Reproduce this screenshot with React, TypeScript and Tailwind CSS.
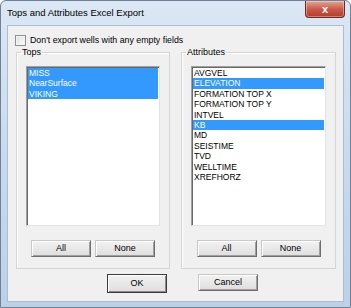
import { useState } from 'react';

const tops = ['MISS', 'NearSurface', 'VIKING'];
const attributes = [
  'AVGVEL',
  'ELEVATION',
  'FORMATION TOP X',
  'FORMATION TOP Y',
  'INTVEL',
  'KB',
  'MD',
  'SEISTIME',
  'TVD',
  'WELLTIME',
  'XREFHORZ',
];

function WinButton({ label, isDefault = false }: { label: string; isDefault?: boolean }) {
  return (
    <button
      className={`w-[60px] flex items-center justify-center text-[9px] text-black bg-gradient-to-b from-[#f2f2f2] to-[#dedede] ${
        isDefault
          ? 'h-[19px] border border-[#3c3c3c] shadow-[inset_1px_1px_0_#ffffff,inset_-1px_-1px_0_#8a8a8a]'
          : 'h-[17px] border border-[#c8c8c8] border-r-[#6e6e6e] border-b-[#6e6e6e] shadow-[inset_1px_1px_0_#ffffff,inset_-1px_-1px_0_#a0a0a0]'
      }`}
    >
      {label}
    </button>
  );
}

function ListBox({ items, selected }: { items: string[]; selected: string[] }) {
  return (
    <div className="h-[160px] bg-white border border-[#a0a0a0] border-r-[#e3e3e3] border-b-[#e3e3e3] shadow-[inset_1px_1px_0_#696969] pt-[1px] pl-[1px] pr-[1px]">
      {items.map((item) => (
        <div
          key={item}
          className={`h-[10.4px] leading-[10.4px] text-[8.5px] pl-[1px] whitespace-nowrap ${
            selected.includes(item) ? 'bg-[#3399ff] text-white' : 'text-black'
          }`}
        >
          {item}
        </div>
      ))}
    </div>
  );
}

function GroupBox({ title, children }: { title: string; children: React.ReactNode }) {
  return (
    <fieldset className="h-[222px] border border-[#d5d5d5] shadow-[inset_1px_1px_0_#ffffff] px-[9px] pt-[8px] flex flex-col">
      <legend className="-ml-[5px] px-[1px] text-[9px] leading-[11px] text-black">{title}</legend>
      {children}
    </fieldset>
  );
}

export default function App() {
  const [skipEmpty, setSkipEmpty] = useState(false);

  return (
    <div className="w-[351px] h-[308px] flex flex-col rounded-t-[6px] border border-[#6f8196] bg-gradient-to-b from-[#dbe7f4] via-[#c9daee] to-[#bcd0e7] font-['Liberation_Sans',Arial,sans-serif]">
      {/* Title bar */}
      <div className="h-[24px] flex items-start pl-[6px] pr-[5px]">
        <span className="mt-[6px] text-[9.5px] leading-[12px] text-black">Tops and Attributes Excel Export</span>
        <button className="ml-auto w-[40px] h-[17px] rounded-b-[4px] border border-[#6b2a24] border-t-0 bg-gradient-to-b from-[#e3a595] via-[#cb5a4a] to-[#b53a2a] shadow-[inset_0_0_0_1px_rgba(255,255,255,0.35)] flex items-center justify-center text-white text-[11px] font-bold leading-none">
          x
        </button>
      </div>

      {/* Client area */}
      <div className="flex-1 mx-[6px] mb-[5px] border border-[#a9bdd4] bg-[#f0f0f0] flex flex-col">
        <label className="flex items-center gap-[4px] pl-[7px] mt-[8px] h-[13px]" onClick={() => setSkipEmpty(!skipEmpty)}>
          <span className="w-[11px] h-[11px] border border-[#8e8f8f] bg-gradient-to-br from-[#dcdcdc] to-white shadow-[inset_0_0_0_1px_#f4f4f4] flex items-center justify-center text-[8px] leading-none">
            {skipEmpty ? '✓' : ''}
          </span>
          <span className="text-[8.8px] text-black whitespace-nowrap">Don't export wells with any empty fields</span>
        </label>

        <div className="flex gap-[11px] pl-[8px]">
          <div className="w-[154px]">
            <GroupBox title="Tops">
              <ListBox items={tops} selected={tops} />
              <div className="flex justify-center gap-[4px] mt-[14px]">
                <WinButton label="All" />
                <WinButton label="None" />
              </div>
            </GroupBox>
          </div>
          <div className="w-[155px]">
            <GroupBox title="Attributes">
              <ListBox items={attributes} selected={['ELEVATION', 'KB']} />
              <div className="flex justify-center gap-[4px] mt-[14px]">
                <WinButton label="All" />
                <WinButton label="None" />
              </div>
            </GroupBox>
          </div>
        </div>

        <div className="flex gap-[31px] pl-[99px] mt-[5px]">
          <WinButton label="OK" isDefault />
          <WinButton label="Cancel" isDefault={false} />
        </div>
      </div>
    </div>
  );
}
